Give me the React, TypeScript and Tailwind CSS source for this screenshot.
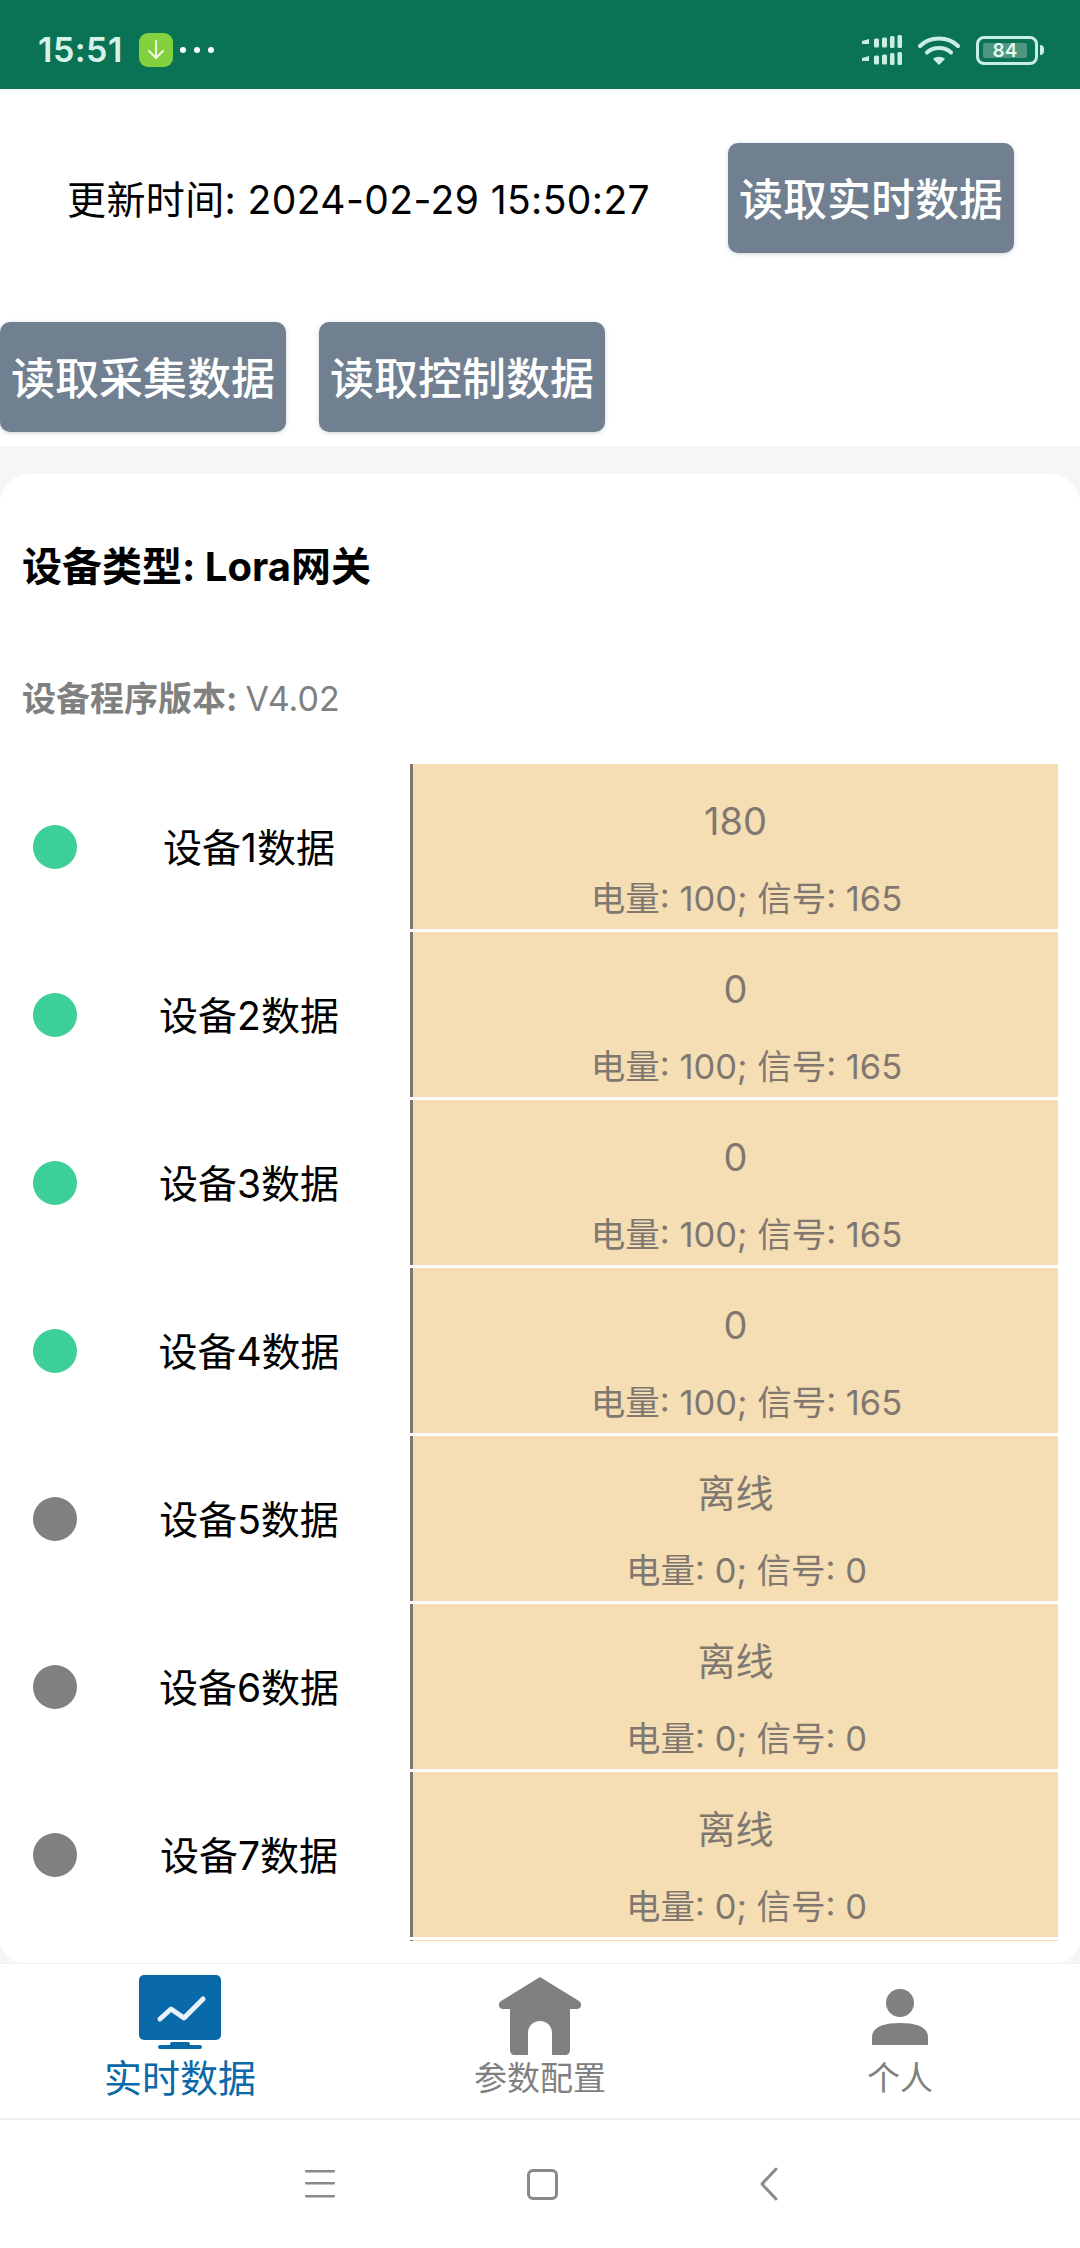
const font = "font-['Inter','Noto_Sans_CJK_SC',sans-serif]";

const rows = [
  { name: '设备1数据', value: '180', sub: '电量: 100; 信号: 165', on: true },
  { name: '设备2数据', value: '0', sub: '电量: 100; 信号: 165', on: true },
  { name: '设备3数据', value: '0', sub: '电量: 100; 信号: 165', on: true },
  { name: '设备4数据', value: '0', sub: '电量: 100; 信号: 165', on: true },
  { name: '设备5数据', value: '离线', sub: '电量: 0; 信号: 0', on: false },
  { name: '设备6数据', value: '离线', sub: '电量: 0; 信号: 0', on: false },
  { name: '设备7数据', value: '离线', sub: '电量: 0; 信号: 0', on: false },
];

function ReadButton({ label }: { label: string }) {
  return (
    <button className="h-[110px] w-[286px] shrink-0 rounded-[10px] bg-[#708090] pt-[3px] text-[44px] font-medium leading-none text-white shadow-[0_1px_4px_rgba(112,128,144,0.35)]">
      {label}
    </button>
  );
}

function Signal() {
  return (
    <svg width="40" height="30" viewBox="0 0 40 30" fill="#c9efe2">
      {[0, 17].map((y) => (
        <g key={y}>
          <path d={`M0 ${y + 6}l7-2v5l-7 0z`} />
          <rect x="12" y={y + 3.5} width="5" height="9" rx="1.5" />
          <rect x="20" y={y + 2.5} width="5" height="10" rx="1.5" />
          <rect x="28" y={y + 1} width="4.5" height="12" rx="1.5" />
          <rect x="35.5" y={y} width="4.5" height="13" rx="1.5" />
        </g>
      ))}
    </svg>
  );
}

function Wifi() {
  return (
    <svg width="42" height="30" viewBox="0 0 42 30" fill="none" stroke="#c9efe2" strokeWidth="4" strokeLinecap="round">
      <path d="M2 11C12 1 30 1 40 11" />
      <path d="M9 17.5C15 11.5 27 11.5 33 17.5" />
      <path d="M21 30l-6-6c3-3 9-3 12 0z" fill="#c9efe2" stroke="none" />
    </svg>
  );
}

function Battery() {
  return (
    <div className="flex items-center gap-[2px]">
      <div className="flex h-[29px] w-[62px] items-center rounded-[8px] border-[3px] border-[#c9efe2] p-[4px]">
        <div className={`flex h-full w-[44px] items-center justify-center rounded-[2px] bg-[#4d967f] text-[19px] font-semibold leading-none text-[#e4f8f1] ${font}`}>
          84
        </div>
      </div>
      <div className="h-[10px] w-[4px] rounded-r-full bg-[#c9efe2]" />
    </div>
  );
}

function StatusBar() {
  return (
    <div className="flex h-[89px] shrink-0 items-center bg-[#0b7355] pl-[38px] pr-[36px] pt-[11px]">
      <span className={`w-[84px] text-[34px] font-semibold leading-none tracking-[0.5px] text-[#d6f3ea] ${font}`}>15:51</span>
      <div className="ml-[17px] flex h-[34px] w-[34px] items-center justify-center rounded-[9px] bg-[#83d13f]">
        <svg width="20" height="22" viewBox="0 0 20 22" fill="none" stroke="#f1fbe6" strokeWidth="2" strokeLinecap="round" strokeLinejoin="round">
          <path d="M10 2v17M3 12l7 7 7-7" />
        </svg>
      </div>
      <div className="ml-[7px] flex gap-[8px]">
        <div className="h-[6px] w-[6px] rounded-full bg-white" />
        <div className="h-[6px] w-[6px] rounded-full bg-white" />
        <div className="h-[6px] w-[6px] rounded-full bg-white" />
      </div>
      <div className="ml-auto flex items-center gap-[16px]">
        <Signal />
        <Wifi />
        <Battery />
      </div>
    </div>
  );
}

function Row({ name, value, sub, on }: { name: string; value: string; sub: string; on: boolean }) {
  return (
    <div className="flex h-[165px] shrink-0 items-center">
      <div className={`ml-[33px] h-[44px] w-[44px] shrink-0 rounded-full ${on ? 'bg-[#3ccf97]' : 'bg-[#808080]'}`} />
      <div className="ml-[11px] flex-1 pt-[2px] text-center text-[39px] leading-none text-black">{name}</div>
      <div className="mr-[22px] flex h-full w-[648px] flex-col items-center border-l-[3px] border-[#807870] bg-[#f5deb3] text-[#807870]">
        <div className="mt-[38px] text-[38px] leading-[38px]">{value}</div>
        <div className="mt-[41px] pl-[22px] text-[34.5px] leading-[35px]">{sub}</div>
      </div>
    </div>
  );
}

function Tab({ label, active, size, icon }: { label: string; active?: boolean; size: string; icon: React.ReactNode }) {
  return (
    <div className="relative flex flex-1 flex-col items-center">
      <div className="flex h-[91px] items-end">{icon}</div>
      <div className={`mt-[1px] leading-[44px] ${size} ${active ? 'text-[#0a69a8]' : 'text-[#808080]'}`}>{label}</div>
    </div>
  );
}

export default function App() {
  return (
    <div className={`flex h-[2248px] w-[1080px] flex-col overflow-hidden bg-white ${font}`}>
      <StatusBar />

      <div className="shrink-0 bg-white pb-[14px] pt-[54px]">
        <div className="flex items-center">
          <div className="ml-[67px] pt-[3px] text-[39px] leading-none tracking-[0.4px] text-black">更新时间: 2024-02-29 15:50:27</div>
          <div className="ml-auto mr-[66px]">
            <ReadButton label="读取实时数据" />
          </div>
        </div>
        <div className="mt-[69px] flex gap-[33px]">
          <ReadButton label="读取采集数据" />
          <ReadButton label="读取控制数据" />
        </div>
      </div>

      <div className="flex min-h-0 flex-1 flex-col bg-[#f5f6f7] pt-[28px]">
        <div className="flex min-h-0 flex-1 flex-col rounded-t-[30px] rounded-b-[24px] bg-white pb-[21px]">
          <div className="ml-[22px] mt-[73px] text-[40px] font-bold leading-[40px] text-black">设备类型: Lora网关</div>
          <div className="ml-[22px] mt-[95px] text-[34px] leading-[34px] text-[#808080]">
            <span className="font-bold">设备程序版本: </span>V4.02
          </div>
          <div className="mt-[48px] flex min-h-0 flex-1 flex-col gap-[3px] overflow-hidden">
            {rows.map((r) => (
              <Row key={r.name} {...r} />
            ))}
            <div className="ml-[410px] mr-[22px] h-[1px] shrink-0 border-l-[3px] border-[#807870] bg-[#f5deb3]" />
          </div>
        </div>
      </div>

      <div className="flex h-[155px] shrink-0 border-t border-[#f0f0f0] bg-white">
        <Tab
          label="实时数据"
          active
          size="text-[38px]"
          icon={
            <svg width="82" height="74" viewBox="0 0 82 74" className="mb-[6px]">
              <rect x="0" y="0" width="82" height="65" rx="5" fill="#0a69a8" />
              <path d="M21 44l11-10 13 9 19-19" fill="none" stroke="#e8f2f9" strokeWidth="5" strokeLinecap="round" strokeLinejoin="round" />
              <rect x="19" y="70" width="44" height="4" rx="2" fill="#0a69a8" />
              <rect x="31" y="67" width="20" height="4" rx="2" fill="#0a69a8" />
            </svg>
          }
        />
        <Tab
          label="参数配置"
          size="text-[33px]"
          icon={
            <svg width="84" height="78" viewBox="0 0 84 78">
              <path
                d="M42 0L81 24c4 3 2 8-2 8h-7v41c0 3-2 5-5 5H54V56c0-7-5-12-12-12s-12 5-12 12v22H17c-3 0-5-2-5-5V32H5c-4 0-6-5-2-8z"
                fill="#808080"
              />
            </svg>
          }
        />
        <Tab
          label="个人"
          size="text-[33px]"
          icon={
            <svg width="56" height="56" viewBox="0 0 56 56" className="mb-[10px]">
              <circle cx="28" cy="14" r="14" fill="#808080" />
              <path d="M0 56V48C0 38 12 34 28 34s28 4 28 14v8z" fill="#808080" />
            </svg>
          }
        />
      </div>

      <div className="flex h-[130px] shrink-0 items-center border-t-2 border-[#eeeeee] bg-white">
        <svg width="32" height="30" viewBox="0 0 32 30" className="ml-[304px]" fill="#8a8a8a">
          <rect x="1" y="1" width="30" height="2.5" rx="1" />
          <rect x="1" y="13" width="30" height="2.5" rx="1" />
          <rect x="1" y="26" width="30" height="2.5" rx="1" />
        </svg>
        <div className="ml-[191px] h-[31px] w-[31px] rounded-[6px] border-[3px] border-[#8a8a8a]" />
        <svg width="20" height="34" viewBox="0 0 20 34" className="ml-[201px]" fill="none" stroke="#8a8a8a" strokeWidth="3" strokeLinecap="round" strokeLinejoin="round">
          <path d="M17 2L3 17l14 15" />
        </svg>
      </div>
    </div>
  );
}
